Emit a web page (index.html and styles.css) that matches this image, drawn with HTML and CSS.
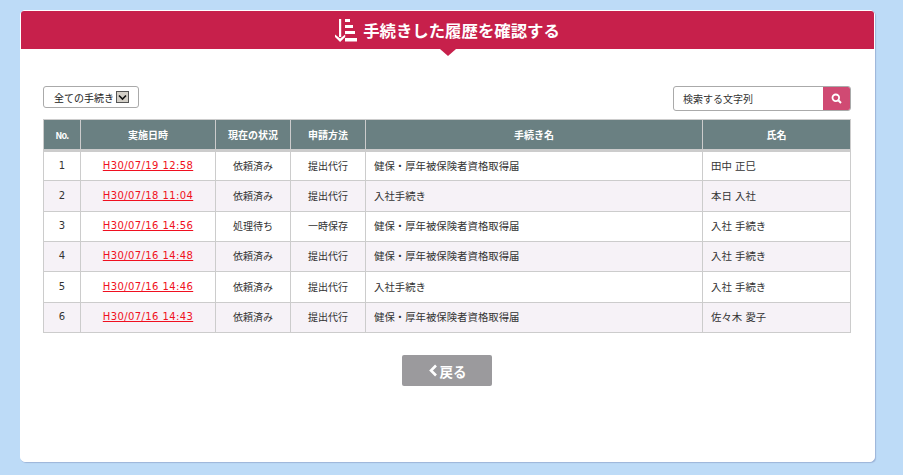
FILE: index.html
```html
<!DOCTYPE html>
<html lang="ja">
<head>
<meta charset="utf-8">
<title>手続きした履歴を確認する</title>
<link rel="stylesheet" href="styles.css">
</head>
<body>
<main class="panel">
  <header class="panel-head">
    <svg class="head-icon" width="22" height="23" viewBox="0 0 22 23" aria-hidden="true">
      <path d="M4 0h2.200v18H4z" fill="#fff"/>
      <path d="M0 15.500l5.100 4 5.100-4v2.500L5.100 23 0 18z" fill="#fff"/>
      <path d="M10 0h5v3h-5zM10 6h8v3h-8zM10 12h10v3H10zM10 19h12v3.500H10z" fill="#fff"/>
    </svg>
    <h1 class="head-title">手続きした履歴を確認する</h1>
  </header>
  <div class="panel-body">
    <div class="toolbar">
      <div class="filter">
        <span>全ての手続き</span>
        <span class="filter-arrow">
          <svg width="9" height="7" viewBox="0 0 9 7" aria-hidden="true"><path d="M1 1.500l3.500 3.500L8 1.500" fill="none" stroke="#111" stroke-width="1.600"/></svg>
        </span>
      </div>
      <div class="search">
        <span class="search-text">検索する文字列</span>
        <span class="search-btn">
          <svg width="11" height="11" viewBox="0 0 11 11" aria-hidden="true"><circle cx="4.800" cy="4.800" r="3.300" fill="none" stroke="#fff" stroke-width="1.800"/><path d="M7.300 7.300L10 10" stroke="#fff" stroke-width="2"/></svg>
        </span>
      </div>
    </div>
    <table class="history">
      <colgroup>
        <col class="c-no"><col class="c-date"><col class="c-status"><col class="c-method"><col class="c-name"><col class="c-person">
      </colgroup>
      <thead>
        <tr><th><span class="no-label">No.</span></th><th>実施日時</th><th>現在の状況</th><th>申請方法</th><th>手続き名</th><th>氏名</th></tr>
      </thead>
      <tbody>
        <tr><td class="center">1</td><td class="center"><a href="#">H30/07/19 12:58</a></td><td class="center">依頼済み</td><td class="center">提出代行</td><td class="wide">健保・厚年被保険者資格取得届</td><td class="wide">田中 正巳</td></tr>
        <tr><td class="center">2</td><td class="center"><a href="#">H30/07/18 11:04</a></td><td class="center">依頼済み</td><td class="center">提出代行</td><td class="wide">入社手続き</td><td class="wide">本日 入社</td></tr>
        <tr><td class="center">3</td><td class="center"><a href="#">H30/07/16 14:56</a></td><td class="center">処理待ち</td><td class="center">一時保存</td><td class="wide">健保・厚年被保険者資格取得届</td><td class="wide">入社 手続き</td></tr>
        <tr><td class="center">4</td><td class="center"><a href="#">H30/07/16 14:48</a></td><td class="center">依頼済み</td><td class="center">提出代行</td><td class="wide">健保・厚年被保険者資格取得届</td><td class="wide">入社 手続き</td></tr>
        <tr><td class="center">5</td><td class="center"><a href="#">H30/07/16 14:46</a></td><td class="center">依頼済み</td><td class="center">提出代行</td><td class="wide">入社手続き</td><td class="wide">入社 手続き</td></tr>
        <tr><td class="center">6</td><td class="center"><a href="#">H30/07/16 14:43</a></td><td class="center">依頼済み</td><td class="center">提出代行</td><td class="wide">健保・厚年被保険者資格取得届</td><td class="wide">佐々木 愛子</td></tr>
      </tbody>
    </table>
    <div class="actions">
      <a class="back" href="#">
        <svg width="10" height="13" viewBox="0 0 10 13" aria-hidden="true"><path d="M8 1.500L3 6.500l5 5" fill="none" stroke="#fff" stroke-width="2.600"/></svg>
        <span>戻る</span>
      </a>
    </div>
  </div>
</main>
</body>
</html>
```
FILE: styles.css
```css
* { box-sizing: border-box; }
html, body { height: 100%; }
body {
  margin: 0;
  padding: 10px 28px 13px 20px;
  background: #bddbf7;
  font-family: "DejaVu Sans", "Noto Sans CJK JP", sans-serif;
  font-size: 10px;
  color: #333;
  overflow: hidden;
}
.panel {
  height: 452px;
  background: #fff;
  border: 1px solid #fff;
  border-radius: 5px;
  box-shadow: 1px 1px 1px #9db4d8;
}
.panel-head {
  position: relative;
  height: 38px;
  background: #c7204b;
  border-radius: 3px 3px 0 0;
  display: flex;
  align-items: center;
  justify-content: center;
  gap: 6px;
}
.panel-head::after {
  content: "";
  position: absolute;
  left: 419px;
  top: 38px;
  border-style: solid;
  border-width: 7px 8px 0;
  border-color: #c7204b transparent transparent;
}
.head-icon { flex: none; }
.head-title {
  margin: 0;
  color: #fff;
  font-family: "Noto Sans CJK JP", sans-serif;
  font-size: 16.400px;
  font-weight: 700;
  line-height: 20px;
}
.panel-body { padding: 37px 23px 0 22px; }
.toolbar {
  display: flex;
  justify-content: space-between;
  align-items: flex-start;
  height: 33px;
}
.filter {
  width: 96px;
  height: 22px;
  border: 1px solid #aaa;
  border-radius: 3px;
  display: flex;
  align-items: center;
  gap: 2px;
  padding-left: 10px;
  font-family: "Noto Sans CJK JP", sans-serif;
  font-size: 10px;
  color: #222;
}
.filter-arrow {
  width: 13px;
  height: 12px;
  display: flex;
  align-items: center;
  justify-content: center;
  background: #d4d0c8;
  border: 1px solid #555;
}
.search {
  width: 178px;
  height: 25px;
  border: 1px solid #aaa;
  border-radius: 3px;
  display: flex;
  align-items: stretch;
  overflow: hidden;
}
.search-text {
  flex: 1;
  padding-left: 9px;
  line-height: 23px;
  font-family: "Noto Sans CJK JP", sans-serif;
  color: #333;
}
.search-btn {
  width: 27px;
  background: #d04a73;
  display: flex;
  align-items: center;
  justify-content: center;
}
.history {
  width: 807px;
  table-layout: fixed;
  border-collapse: collapse;
  font-family: "DejaVu Sans", "Noto Sans CJK JP", sans-serif;
}
.c-no { width: 37px; }
.c-date { width: 135px; }
.c-status { width: 75px; }
.c-method { width: 75px; }
.c-name { width: 337px; }
.c-person { width: 148px; }
.history th {
  height: 31px;
  padding: 0;
  background: #6a8082;
  border: 1px solid #ccc;
  border-bottom-width: 3px;
  color: #fff;
  font-family: "Noto Sans CJK JP", sans-serif;
  font-size: 10px;
  font-weight: 700;
}
.no-label {
  font-size: 9px;
  letter-spacing: -0.800px;
}
.history td {
  height: 30px;
  padding: 0 7px 2px 8px;
  border: 1px solid #ccc;
  font-family: "DejaVu Sans", "Noto Sans CJK JP", sans-serif;
  color: #333;
}
.history tbody tr:nth-child(3n + 2) td { height: 31px; }
.history tbody tr:nth-child(even) td { background: #f6f2f7; }
.history td.center { text-align: center; padding: 0 0 2px; }
.history td.wide { font-size: 10.400px; }
.history a {
  color: #f01020;
  letter-spacing: 0.400px;
}
.actions {
  display: flex;
  justify-content: center;
  margin-top: 22px;
}
.back {
  width: 90px;
  height: 31px;
  background: #9b9a9d;
  border-radius: 2px;
  display: flex;
  align-items: center;
  justify-content: center;
  gap: 2px;
  color: #fff;
  font-family: "Noto Sans CJK JP", sans-serif;
  font-size: 13.500px;
  font-weight: 700;
  text-decoration: none;
}
```
